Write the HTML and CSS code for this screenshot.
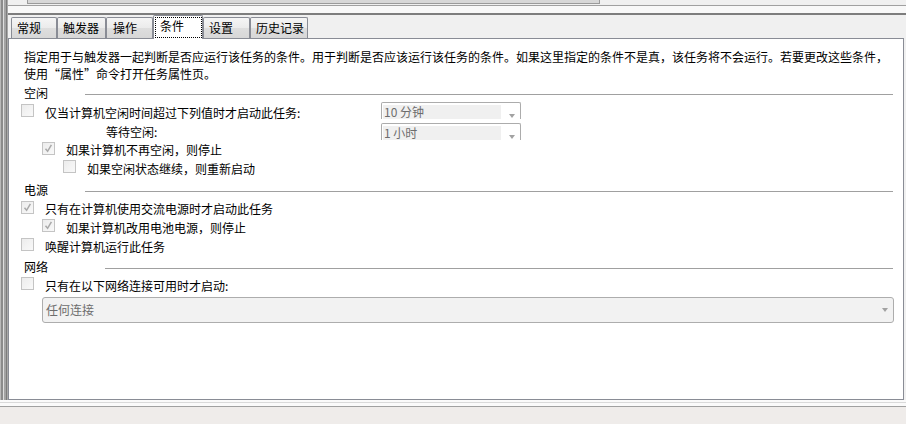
FILE: index.html
```html
<!DOCTYPE html>
<html lang="zh-CN">
<head>
<meta charset="utf-8">
<title>条件</title>
<link rel="stylesheet" href="styles.css">
</head>
<body>
<div class="win">
  <div class="lframe"></div>
  <div class="col">
    <div class="hbar"><div class="thumb"></div></div>
    <div class="rules"></div>
    <div class="tabs">
      <div class="tab t1">常规</div>
      <div class="tab t2">触发器</div>
      <div class="tab t3">操作</div>
      <div class="tab sel"><span class="focus">条件</span></div>
      <div class="tab t5">设置</div>
      <div class="tab t6">历史记录</div>
    </div>
    <div class="panel">
      <div class="desc">指定用于与触发器一起判断是否应运行该任务的条件。用于判断是否应该运行该任务的条件。如果这里指定的条件不是真，该任务将不会运行。若要更改这些条件，<br>使用<span class="q-open">“</span>属性<span class="q-close">”</span>命令打开任务属性页。</div>

      <div class="sec s-idle"><span class="sec-label">空闲</span><span class="sec-line l37"></span></div>
      <div class="idle-grid">
        <div class="row h19"><span class="cb"></span><span class="lbl">仅当计算机空闲时间超过下列值时才启动此任务:</span></div>
        <div class="dd dd1"><span class="dd-field">10 分钟</span><span class="arrow"></span></div>
        <div class="row h19"><span class="wait">等待空闲:</span></div>
        <div class="dd dd2"><span class="dd-field">1 小时</span><span class="arrow"></span></div>
      </div>
      <div class="row h18 lv1"><span class="cb on"><svg viewBox="0 0 13 13" width="13" height="13"><path d="M3.5 6.8 L5.6 9.3 L9.4 2.8" fill="none" stroke="#a9a9a9" stroke-width="1.5"/></svg></span><span class="lbl">如果计算机不再空闲，则停止</span></div>
      <div class="row h19 lv2"><span class="cb"></span><span class="lbl">如果空闲状态继续，则重新启动</span></div>

      <div class="sec s-power"><span class="sec-label">电源</span><span class="sec-line l37"></span></div>
      <div class="row h18 r-p1"><span class="cb on"><svg viewBox="0 0 13 13" width="13" height="13"><path d="M3.5 6.8 L5.6 9.3 L9.4 2.8" fill="none" stroke="#a9a9a9" stroke-width="1.5"/></svg></span><span class="lbl">只有在计算机使用交流电源时才启动此任务</span></div>
      <div class="row h19 lv1"><span class="cb on"><svg viewBox="0 0 13 13" width="13" height="13"><path d="M3.5 6.8 L5.6 9.3 L9.4 2.8" fill="none" stroke="#a9a9a9" stroke-width="1.5"/></svg></span><span class="lbl">如果计算机改用电池电源，则停止</span></div>
      <div class="row h19"><span class="cb"></span><span class="lbl">唤醒计算机运行此任务</span></div>

      <div class="sec s-net"><span class="sec-label">网络</span><span class="sec-line l57"></span></div>
      <div class="row h19"><span class="cb"></span><span class="lbl">只有在以下网络连接可用时才启动:</span></div>
      <div class="combo"><span class="combo-text">任何连接</span><span class="arrow"></span></div>
    </div>
  </div>
</div>
<div class="bstrip"></div>
<div class="footer"></div>
</body>
</html>
```

FILE: styles.css
```css
html, body {
  margin: 0;
  padding: 0;
}

body {
  width: 906px;
  height: 424px;
  overflow: hidden;
  background: #f0f0f0;
  font-family: "Noto Sans CJK SC", "Liberation Sans", sans-serif;
  font-size: 12px;
  color: #000;
  display: flex;
  flex-direction: column;
}

.win {
  display: flex;
  height: 400px;
  flex: none;
}

.lframe {
  width: 8px;
  flex: none;
  background: linear-gradient(to right,
    #b9b9b9 0 1px, #8b8b8b 1px 3px, #dedede 3px 4px,
    #a3a3a3 4px 6px, #7c7c7c 6px 7px, #a9a9a9 7px 8px);
}

.col {
  width: 898px;
  display: flex;
  flex-direction: column;
}

.hbar {
  height: 4px;
  background: #f0f0f0;
}

.thumb {
  margin-left: 19px;
  width: 571px;
  height: 3px;
  background: #d7d7d7;
  border: 1px solid #9a9a9a;
  border-top: none;
}

.rules {
  height: 11px;
  background: linear-gradient(#efefef 0 1px, #a0a0a0 1px 2px, #f8f8f8 2px 9px, #7d7d7d 9px 11px);
}

.tabs {
  height: 23px;
  display: flex;
  align-items: flex-end;
  padding-left: 3px;
}

.tab {
  height: 21px;
  box-sizing: border-box;
  border: 1px solid #898c95;
  border-bottom: none;
  border-radius: 2px 2px 0 0;
  background: linear-gradient(#f5f5f5, #ebebeb 50%, #dedede 50%, #d7d7d7);
  padding-left: 5px;
  line-height: 19px;
  white-space: nowrap;
  flex: none;
}

.t1 { width: 46px; }
.t2 { width: 49px; }
.t3 { width: 47px; padding-left: 6px; }
.t5 { width: 47px; }
.t6 { width: 58px; }

.sel {
  width: 50px;
  height: 24px;
  margin-bottom: -1px;
  background: #fff;
  position: relative;
  z-index: 1;
  padding: 1px 0 0 1px;
}

.focus {
  display: block;
  width: 47px;
  height: 21px;
  box-sizing: border-box;
  border: 1px dotted #000;
  padding-left: 4px;
  line-height: 15px;
}

.panel {
  width: 896px;
  height: 362px;
  box-sizing: border-box;
  border: 1px solid #898c95;
  background: #fff;
  padding: 0 10px 0 12px;
}

.desc {
  margin: 9px 0 0 3px;
  line-height: 17px;
  white-space: nowrap;
}

.q-open,
.q-close {
  display: inline-block;
  width: 12px;
}

.q-open { text-align: right; }
.q-close { text-align: left; }

.sec {
  display: flex;
  height: 18px;
  line-height: 18px;
  padding-left: 3px;
}

.s-idle { margin-top: 2px; }
.s-power { margin-top: 3px; }
.s-net { margin-top: 2px; }

.sec-line {
  flex: 1;
  height: 1px;
  margin-top: 10px;
  background: #a0a0a0;
}

.l37 { margin-left: 37px; }
.l57 { margin-left: 57px; }

.row {
  display: flex;
  align-items: flex-start;
}

.h18 { height: 18px; line-height: 18px; }
.h19 { height: 19px; line-height: 19px; }

.r-p1 { margin-top: 1px; }

.lv1 { padding-left: 21px; }
.lv2 { padding-left: 42px; }

.cb {
  width: 13px;
  height: 13px;
  box-sizing: border-box;
  border: 1px solid #c4c4c4;
  background: linear-gradient(135deg, #ececec, #f9f9f9);
  margin-top: 1px;
  margin-right: 11px;
  flex: none;
}

.cb svg {
  display: block;
  margin: -1px 0 0 -1px;
}

.lbl {
  white-space: nowrap;
}

.idle-grid {
  display: grid;
  grid-template-columns: 360px 140px;
  grid-template-rows: 19px 19px;
  margin-top: 1px;
}

.wait {
  padding-left: 85px;
}

.dd {
  width: 140px;
  height: 17px;
  box-sizing: border-box;
  border: 1px solid #acacac;
  border-bottom: none;
  border-radius: 2px 2px 0 0;
  overflow: hidden;
  display: flex;
  align-items: flex-start;
  align-self: start;
}

.dd1 { margin-top: -1px; }
.dd2 { margin-top: 1px; }

.dd-field {
  width: 117px;
  height: 16px;
  margin: 2px 0 0 1px;
  padding-left: 1px;
  background: #f0f0f0;
  color: #6d6d6d;
  line-height: 14px;
  white-space: nowrap;
}

.arrow {
  width: 0;
  height: 0;
  border-left: 3.5px solid transparent;
  border-right: 3.5px solid transparent;
  border-top: 4px solid #a2a2a2;
  flex: none;
}

.dd .arrow {
  margin: 11px 0 0 8px;
}

.combo {
  margin: 2px 0 0 21px;
  width: 852px;
  height: 26px;
  box-sizing: border-box;
  border: 1px solid #adadad;
  border-radius: 3px;
  background: #f2f2f2;
  display: flex;
  align-items: center;
  padding: 0 5px 0 3px;
}

.combo-text {
  flex: 1;
  color: #6d6d6d;
  line-height: 24px;
}

.bstrip {
  height: 7px;
  flex: none;
  background: linear-gradient(#fafafa 0 2px, #d9d9d9 2px 3px, #fafafa 3px 6px, #a0a0a0 6px 7px);
}

.footer {
  flex: 1;
  background: #efecea;
}
```
